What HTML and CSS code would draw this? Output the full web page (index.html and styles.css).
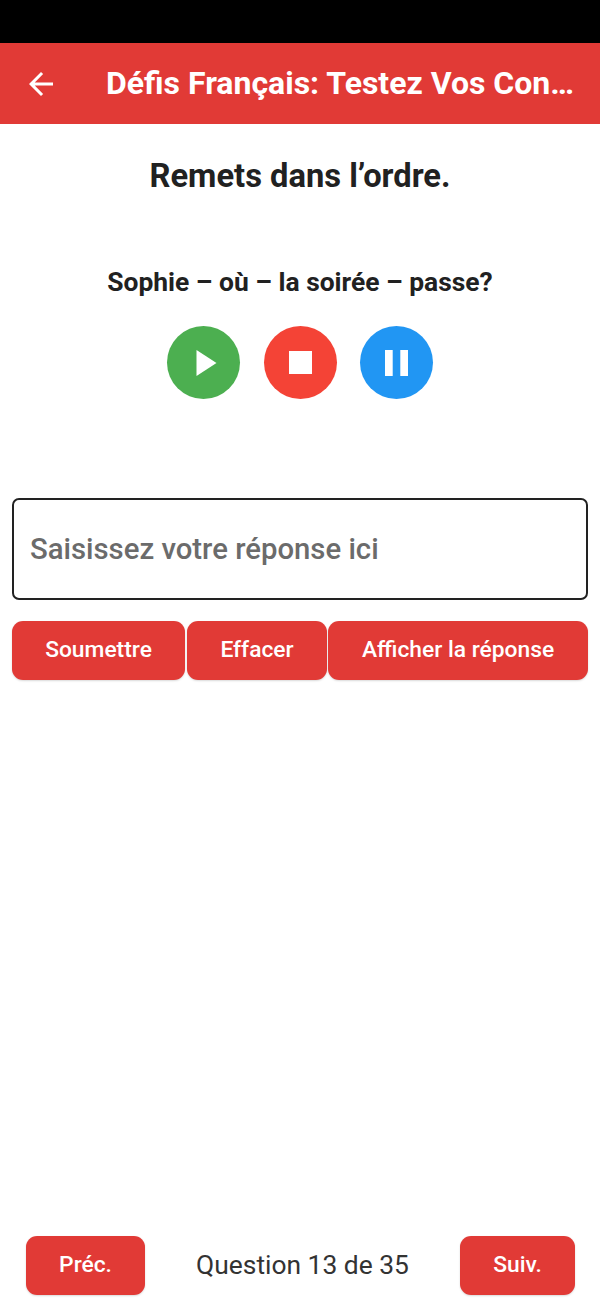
FILE: index.html
```html
<!DOCTYPE html>
<html lang="fr">
<head>
    <meta charset="UTF-8">
    <meta name="viewport" content="width=device-width, initial-scale=1.0">
    <title>Défis Français</title>
    <link rel="stylesheet" href="styles.css">
</head>
<body>
    <div class="page">
        <div class="status"></div>
        <header class="appbar">
            <svg class="back" viewBox="0 0 24 24" width="36" height="36">
                <path d="M20 11H7.83l5.59-5.59L12 4l-8 8 8 8 1.41-1.41L7.83 13H20v-2z" fill="#fff"/>
            </svg>
            <h1 class="apptitle">Défis Français: Testez Vos Con…</h1>
        </header>

        <main class="main">
            <h2 class="heading">Remets dans l’ordre.</h2>
            <p class="sentence">Sophie – où – la soirée – passe?</p>

            <div class="controls">
                <button class="round green">
                    <svg viewBox="0 0 30 26" width="30" height="26"><path d="M7.5 0 L27.5 13 L7.5 26 Z" fill="#fff"/></svg>
                </button>
                <button class="round red">
                    <svg viewBox="0 0 23 23" width="23" height="23"><rect width="23" height="23" fill="#fff"/></svg>
                </button>
                <button class="round blue">
                    <svg viewBox="0 0 23 26" width="23" height="26"><rect width="7.7" height="26" fill="#fff"/><rect x="15.3" width="7.7" height="26" fill="#fff"/></svg>
                </button>
            </div>

            <input class="answer" type="text" placeholder="Saisissez votre réponse ici">

            <div class="actions">
                <button class="btn submit">Soumettre</button>
                <button class="btn clear">Effacer</button>
                <button class="btn show">Afficher la réponse</button>
            </div>
        </main>

        <footer class="footer">
            <button class="btn prev">Préc.</button>
            <span class="counter">Question 13 de 35</span>
            <button class="btn next">Suiv.</button>
        </footer>
    </div>
</body>
</html>
```

FILE: styles.css
```css
*{
    margin: 0;
    padding: 0;
    box-sizing: border-box;
}
body{
    background: #fff;
    font-family: Roboto, "Liberation Sans", sans-serif;
    color: #212121;
}
.page{
    width: 600px;
    height: 1300px;
    display: flex;
    flex-direction: column;
    overflow: hidden;
}
.status{
    height: 43px;
    background: #000;
}
.appbar{
    height: 81px;
    background: #e13a36;
    display: flex;
    align-items: center;
    padding-left: 23px;
    color: #fff;
}
.back{
    flex: none;
}
.apptitle{
    margin-left: 47px;
    padding-bottom: 2px;
    font-size: 32px;
    font-weight: 700;
    white-space: nowrap;
}
.main{
    flex: 1;
    padding: 0 12px;
    display: flex;
    flex-direction: column;
}
.heading{
    margin-top: 33px;
    height: 38px;
    line-height: 38px;
    font-size: 32.7px;
    font-weight: 700;
    text-align: center;
}
.sentence{
    margin-top: 73px;
    height: 30px;
    line-height: 28px;
    font-size: 26.4px;
    font-weight: 700;
    text-align: center;
}
.controls{
    margin-top: 28px;
    display: flex;
    justify-content: center;
    gap: 23.5px;
}
.round{
    width: 73px;
    height: 73px;
    border: none;
    border-radius: 50%;
    display: flex;
    align-items: center;
    justify-content: center;
}
.green{
    background: #4caf50;
}
.red{
    background: #f44336;
}
.blue{
    background: #2196f3;
}
.answer{
    margin-top: 99px;
    height: 102px;
    width: 100%;
    border: 2px solid #222;
    border-radius: 7px;
    padding: 0 16px;
    font-family: inherit;
    font-size: 29.3px;
    font-weight: 500;
    outline: none;
}
.answer::placeholder{
    color: #6b6b6b;
    opacity: 1;
}
.actions{
    margin-top: 21px;
    display: flex;
    gap: 1px;
}
.btn{
    height: 59px;
    border: none;
    border-radius: 11px;
    background: #e13a36;
    color: #fff;
    font-family: inherit;
    font-size: 22.8px;
    font-weight: 500;
    padding-bottom: 2px;
    box-shadow: 0 1px 2px rgba(0,0,0,0.15);
}
.submit{
    width: 173px;
    margin-right: 1px;
}
.clear{
    width: 140px;
}
.show{
    flex: 1;
}
.footer{
    height: 64px;
    padding: 0 25px 0 26px;
    display: flex;
    align-items: flex-start;
    justify-content: space-between;
}
.prev{
    width: 119px;
}
.next{
    width: 115px;
}
.counter{
    margin-top: 14px;
    font-size: 26.4px;
    line-height: 30px;
    color: #333;
}
```
